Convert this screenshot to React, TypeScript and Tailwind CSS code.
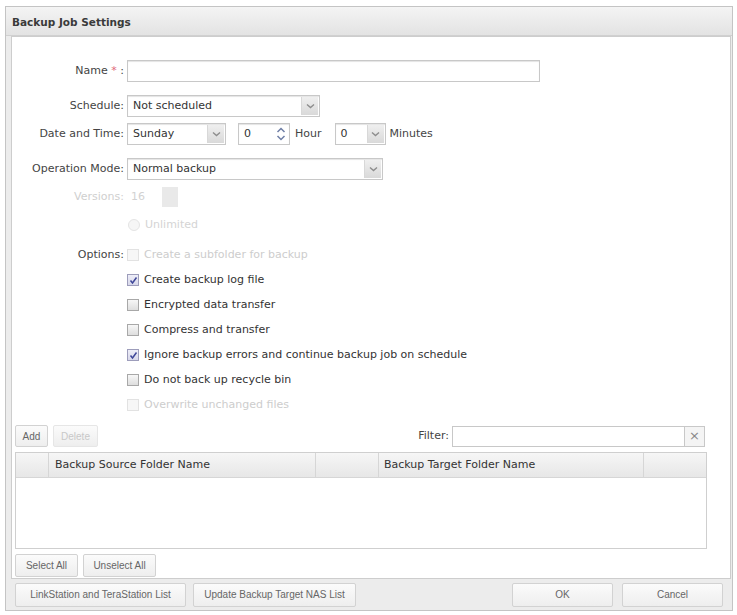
import React from "react";

const Chevron = () => (
  <svg width="9" height="6" viewBox="0 0 9 6">
    <path d="M1 1.5 4.5 4.5 8 1.5" fill="none" stroke="#8d8d8d" strokeWidth="1.4" />
  </svg>
);

const SpinArrows = () => (
  <svg width="10" height="14" viewBox="0 0 10 14">
    <path d="M1.5 5 5 1.5 8.5 5" fill="none" stroke="#6f7fa6" strokeWidth="1.5" />
    <path d="M1.5 9 5 12.5 8.5 9" fill="none" stroke="#6f7fa6" strokeWidth="1.5" />
  </svg>
);

const Select = ({ value, width }: { value: string; width: string }) => (
  <div className={`flex h-[22px] ${width} border border-[#c8c8c8] bg-white shadow-[inset_0_1px_1px_#e4e4e4]`}>
    <span className="flex-1 pl-[5px] leading-[20px] text-[#333]">{value}</span>
    <span className="my-[1px] mr-[1px] flex w-[17px] items-center justify-center border-l border-[#d8d8d8] bg-gradient-to-b from-[#efefef] to-[#d9d9d9]">
      <Chevron />
    </span>
  </div>
);

const Checkbox = ({ checked, disabled }: { checked?: boolean; disabled?: boolean }) => (
  <span
    className={`flex h-[12px] w-[12px] items-center justify-center border ${
      disabled
        ? "border-[#e2e2e2] bg-[#f7f7f7]"
        : checked
        ? "border-[#9d9dbb] bg-gradient-to-b from-[#eeeef8] to-[#d8d8ea]"
        : "border-[#a8a8a8] bg-gradient-to-b from-[#f7f7f7] to-[#dedede]"
    }`}
  >
    {checked && (
      <svg width="9" height="9" viewBox="0 0 9 9">
        <path d="M1.5 4.5 3.5 7 7.5 1.5" fill="none" stroke="#3f4799" strokeWidth="1.5" />
      </svg>
    )}
  </span>
);

const FormRow = ({ label, children, faded }: { label?: React.ReactNode; children: React.ReactNode; faded?: boolean }) => (
  <div className="flex h-[22px] items-center gap-[3px]">
    <div className={`w-[112px] text-right ${faded ? "text-[#cfcfcf]" : "text-[#444]"}`}>{label}</div>
    <div className="flex items-center">{children}</div>
  </div>
);

const options = [
  { text: "Create a subfolder for backup", disabled: true },
  { text: "Create backup log file", checked: true },
  { text: "Encrypted data transfer" },
  { text: "Compress and transfer" },
  { text: "Ignore backup errors and continue backup job on schedule", checked: true },
  { text: "Do not back up recycle bin" },
  { text: "Overwrite unchanged files", disabled: true },
];

const SmallButton = ({ children, className = "" }: { children: React.ReactNode; className?: string }) => (
  <button
    className={`flex items-center justify-center rounded-[2px] border border-[#d2d2d2] bg-gradient-to-b from-[#fbfbfb] to-[#eeeeee] font-['Liberation_Sans',sans-serif] text-[10px] text-[#666] ${className}`}
  >
    {children}
  </button>
);

export default function App() {
  return (
    <div className="h-[615px] w-[737px] bg-white pl-[5px] pt-[6px] font-['DejaVu_Sans',sans-serif] text-[11px]">
      <div className="flex h-[605px] w-[728px] flex-col border border-[#c4c4c4] bg-[#ececec]">
        {/* title bar */}
        <div className="flex h-[29px] items-center border-b border-[#d0d0d0] bg-gradient-to-b from-[#f4f4f4] to-[#e3e3e3] pl-[6px] pt-[4px] text-[10.5px] font-bold text-[#3a3a3a]">
          Backup Job Settings
        </div>

        {/* settings panel */}
        <div className="ml-[5px] mr-[1px] flex h-[543px] flex-col border border-[#cdcdcd] bg-white pt-[23px]">
          <FormRow
            label={
              <>
                Name <span className="text-[#e06a7a]">*</span> :
              </>
            }
          >
            <input className="h-[22px] w-[413px] border border-[#c8c8c8] shadow-[inset_0_1px_1px_#e4e4e4] outline-none" />
          </FormRow>

          <div className="mt-[13px]">
            <FormRow label="Schedule:">
              <Select value="Not scheduled" width="w-[193px]" />
            </FormRow>
          </div>

          <div className="mt-[6px]">
            <FormRow label="Date and Time:">
              <Select value="Sunday" width="w-[99px]" />
              <div className="ml-[12px] flex h-[22px] w-[52px] items-center border border-[#c8c8c8] shadow-[inset_0_1px_1px_#e4e4e4]">
                <span className="flex-1 pl-[5px] text-[#333]">0</span>
                <span className="mr-[3px]">
                  <SpinArrows />
                </span>
              </div>
              <span className="ml-[5px] text-[#444]">Hour</span>
              <div className="ml-[13px]">
                <Select value="0" width="w-[51px]" />
              </div>
              <span className="ml-[4px] text-[#444]">Minutes</span>
            </FormRow>
          </div>

          <div className="mt-[13px]">
            <FormRow label="Operation Mode:">
              <Select value="Normal backup" width="w-[256px]" />
            </FormRow>
          </div>

          <div className="mt-[6px]">
            <FormRow label="Versions:" faded>
              <span className="ml-[4px] w-[31px] text-[#d2d2d2]">16</span>
              <span className="h-[20px] w-[16px] bg-[#e9e9e9]" />
            </FormRow>
          </div>

          <div className="mt-[6px]">
            <FormRow>
              <span className="ml-[1px] h-[12px] w-[12px] rounded-full border border-[#e4e4e4] bg-[#f6f6f6]" />
              <span className="ml-[5px] text-[#d4d4d4]">Unlimited</span>
            </FormRow>
          </div>

          <div className="mt-[8px] flex flex-col gap-[3px]">
            {options.map((o, i) => (
              <FormRow key={o.text} label={i === 0 ? "Options:" : undefined}>
                <Checkbox checked={o.checked} disabled={o.disabled} />
                <span className={`ml-[5px] ${o.disabled ? "text-[#cdcdcd]" : "text-[#333]"}`}>{o.text}</span>
              </FormRow>
            ))}
          </div>

          {/* folder pair list */}
          <div className="mt-[9px] flex h-[22px] items-center px-[3px]">
            <SmallButton className="h-[22px] w-[33px] text-[#444]">Add</SmallButton>
            <SmallButton className="ml-[5px] h-[22px] w-[45px] border-[#e6e6e6] text-[#c8c8c8]">Delete</SmallButton>
            <span className="ml-auto mr-[3px] text-[#444]">Filter:</span>
            <input className="h-[21px] w-[233px] border border-[#c8c8c8] outline-none" />
            <span className="flex h-[21px] w-[20px] items-center justify-center border border-l-0 border-[#c8c8c8] bg-[#f4f4f4] text-[13px] text-[#888]">
              ×
            </span>
            <span className="w-[22px]" />
          </div>

          <div className="mx-[3px] mt-[5px] h-[97px] w-[692px] border border-[#cfcfcf]">
            <div className="flex h-[25px] border-b border-[#d6d6d6] bg-gradient-to-b from-[#f6f6f6] to-[#e7e7e7] text-[#333]">
              <div className="w-[33px] border-r border-[#d6d6d6]" />
              <div className="w-[267px] border-r border-[#d6d6d6] pl-[6px] leading-[24px]">Backup Source Folder Name</div>
              <div className="w-[63px] border-r border-[#d6d6d6]" />
              <div className="w-[265px] border-r border-[#d6d6d6] pl-[5px] leading-[24px]">Backup Target Folder Name</div>
              <div className="flex-1" />
            </div>
          </div>

          <div className="mt-[5px] flex gap-[5px] px-[3px]">
            <SmallButton className="h-[23px] w-[63px]">Select All</SmallButton>
            <SmallButton className="h-[23px] w-[73px]">Unselect All</SmallButton>
          </div>
        </div>

        {/* footer actions */}
        <div className="flex flex-1 items-center px-[9px]">
          <SmallButton className="h-[24px] w-[171px]">LinkStation and TeraStation List</SmallButton>
          <SmallButton className="ml-[7px] h-[24px] w-[163px]">Update Backup Target NAS List</SmallButton>
          <SmallButton className="ml-auto h-[24px] w-[101px]">OK</SmallButton>
          <SmallButton className="ml-[9px] h-[24px] w-[101px]">Cancel</SmallButton>
        </div>
      </div>
    </div>
  );
}
